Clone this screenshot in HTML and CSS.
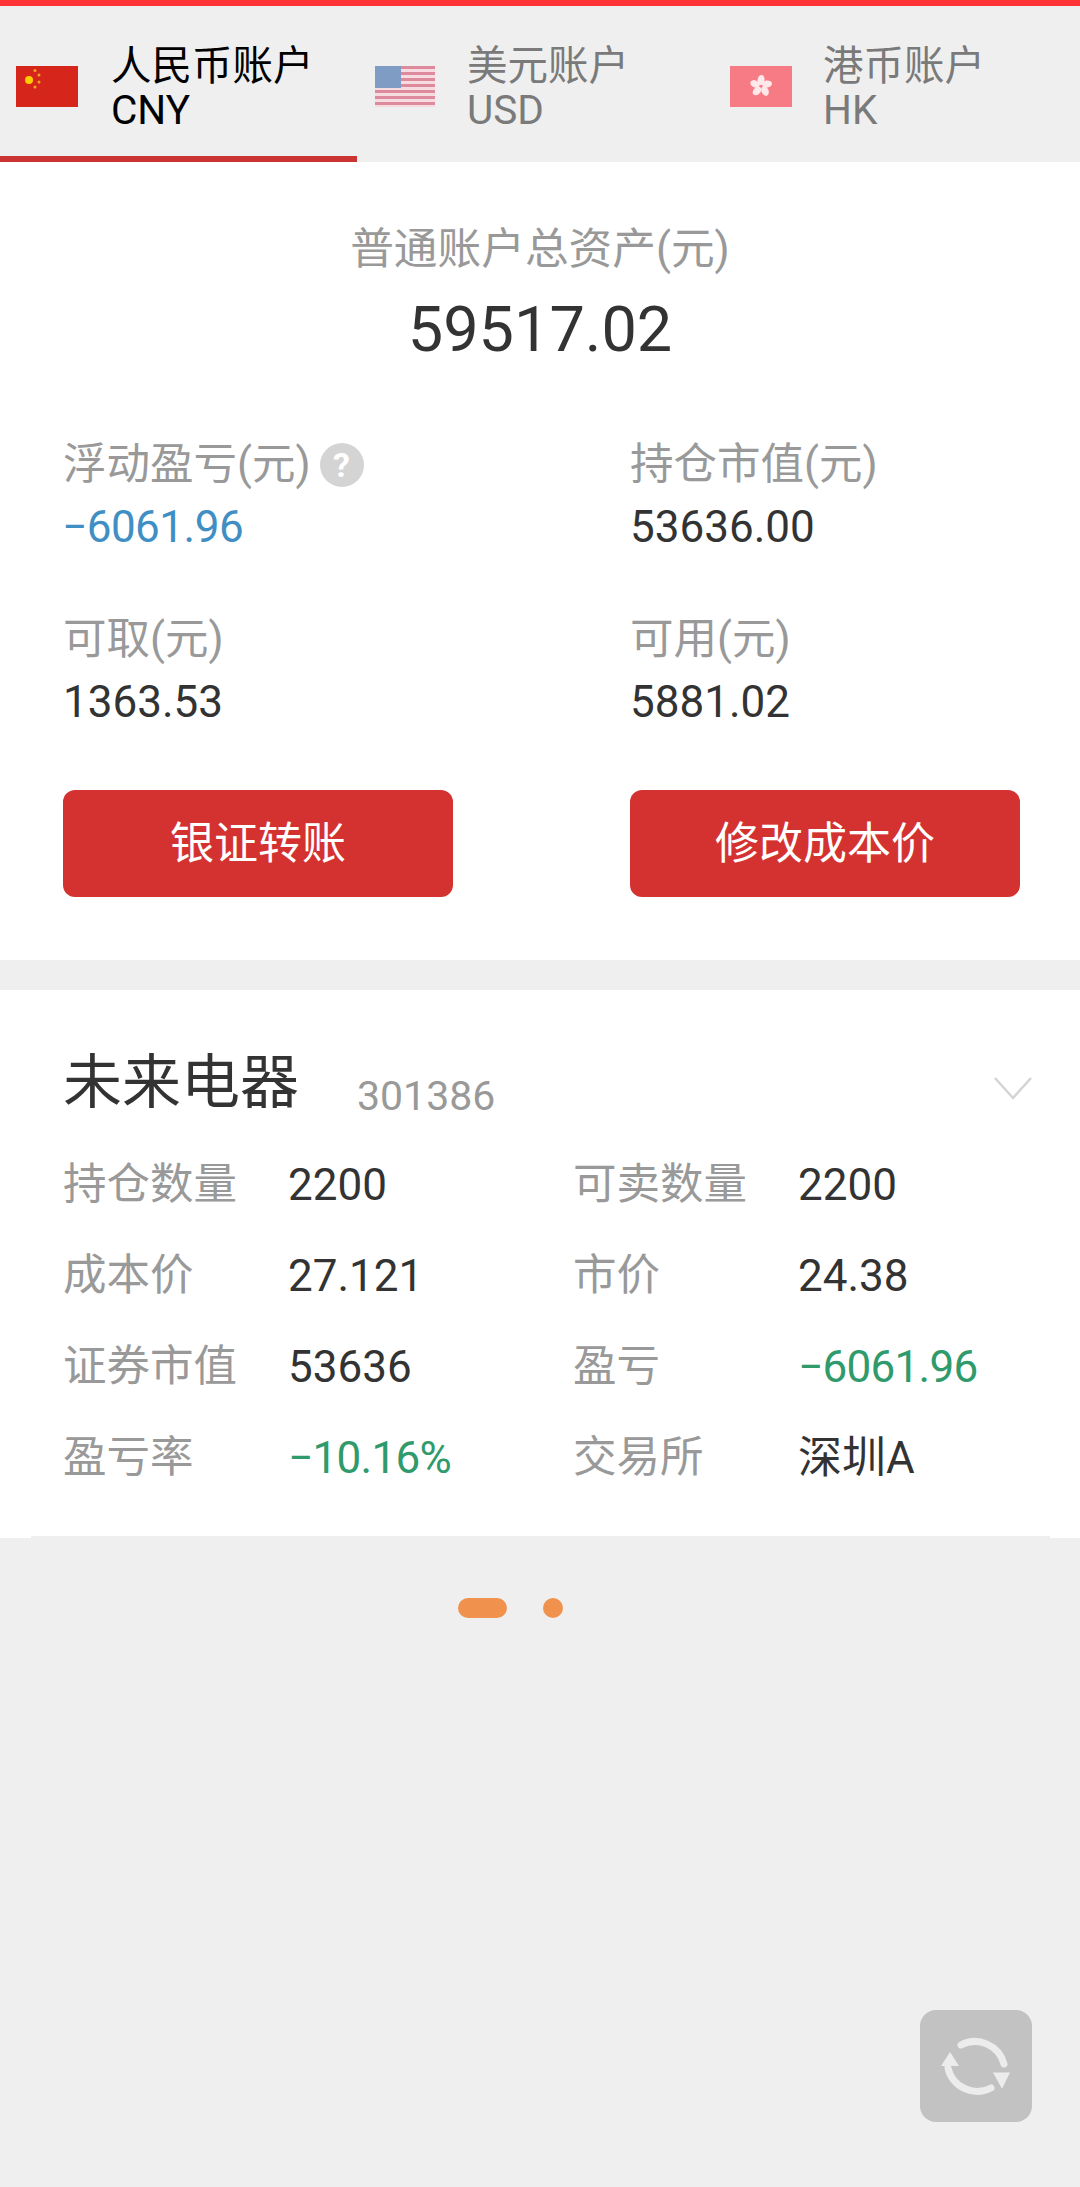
FILE: index.html
```html
<!DOCTYPE html>
<html lang="zh-CN">
<head>
<meta charset="utf-8">
<title>账户</title>
<link rel="stylesheet" href="styles.css">
</head>
<body>
<div class="page">
  <div class="topbar"></div>
  <nav class="tabs">
    <div class="tab active">
      <svg class="flag" viewBox="0 0 62 41"><rect width="62" height="41" fill="#d6261c"/><circle cx="13" cy="14" r="4" fill="#fc0"/><circle cx="19" cy="4.500" r="1.500" fill="#f5a623"/><circle cx="23" cy="9" r="1.500" fill="#f5a623"/><circle cx="23" cy="16" r="1.500" fill="#f5a623"/><circle cx="19" cy="21" r="1.500" fill="#f5a623"/></svg>
      <div class="tab-text"><span>人民币账户</span><span>CNY</span></div>
    </div>
    <div class="tab">
      <svg class="flag usa" viewBox="0 0 60 41"><rect width="60" height="41" fill="#f6dbe0"/><path d="M0 1.500H60M0 7.500H60M0 13.500H60M0 19.500H60M0 25.500H60M0 31.500H60M0 37.500H60" stroke="#dd8b9c" stroke-width="3"/><rect width="26" height="22" fill="#7f9cc4"/></svg>
      <div class="tab-text"><span>美元账户</span><span>USD</span></div>
    </div>
    <div class="tab">
      <svg class="flag" viewBox="0 0 62 41"><rect width="62" height="41" fill="#f77b85"/><g fill="#fde9ea"><ellipse cx="31" cy="14" rx="3.500" ry="5" transform="rotate(10 31 14)"/><ellipse cx="37" cy="18" rx="3.500" ry="5" transform="rotate(82 37 18)"/><ellipse cx="35" cy="25" rx="3.500" ry="5" transform="rotate(154 35 25)"/><ellipse cx="27" cy="25" rx="3.500" ry="5" transform="rotate(226 27 25)"/><ellipse cx="25" cy="18" rx="3.500" ry="5" transform="rotate(298 25 18)"/></g></svg>
      <div class="tab-text"><span>港币账户</span><span>HK</span></div>
    </div>
  </nav>

  <section class="summary">
    <div class="total-label">普通账户总资产(元)</div>
    <div class="total-value">59517.02</div>
    <div class="stats">
      <div class="stat">
        <div class="stat-label">浮动盈亏(元)<span class="help">?</span></div>
        <div class="stat-value blue">−6061.96</div>
      </div>
      <div class="stat">
        <div class="stat-label">持仓市值(元)</div>
        <div class="stat-value">53636.00</div>
      </div>
      <div class="stat">
        <div class="stat-label">可取(元)</div>
        <div class="stat-value">1363.53</div>
      </div>
      <div class="stat">
        <div class="stat-label">可用(元)</div>
        <div class="stat-value">5881.02</div>
      </div>
    </div>
    <div class="actions">
      <button class="btn">银证转账</button>
      <button class="btn">修改成本价</button>
    </div>
  </section>

  <section class="position">
    <div class="pos-head">
      <span class="pos-name">未来电器</span>
      <span class="pos-code">301386</span>
      <svg class="chevron" viewBox="0 0 40 24"><path d="M2 2L20 22L38 2" fill="none" stroke="#d4d4d4" stroke-width="2.500"/></svg>
    </div>
    <div class="pos-grid">
      <span class="k">持仓数量</span><span class="v">2200</span><span class="k">可卖数量</span><span class="v">2200</span>
      <span class="k">成本价</span><span class="v">27.121</span><span class="k">市价</span><span class="v">24.38</span>
      <span class="k">证券市值</span><span class="v">53636</span><span class="k">盈亏</span><span class="v green">−6061.96</span>
      <span class="k">盈亏率</span><span class="v green">−10.16%</span><span class="k">交易所</span><span class="v">深圳A</span>
    </div>
    <div class="rule"></div>
  </section>

  <div class="dots"><span class="dot wide"></span><span class="dot"></span></div>

  <div class="refresh">
    <svg viewBox="0 0 112 112" width="112" height="112"><g fill="none" stroke="#ececec" stroke-width="7" stroke-linecap="round"><path d="M41 35A30 30 0 0 1 84 54"/><path d="M71 78A30 30 0 0 1 28 58"/></g><path d="M73 57H90L82 71Z" fill="#ececec" transform="translate(0 -3) scale(1 1.150)"/><path d="M21 56H39L30 42Z" fill="#ececec"/></svg>
  </div>
</div>
</body>
</html>
```
FILE: styles.css
```css
* { box-sizing: border-box; }
html, body { margin: 0; padding: 0; }
body {
  background: #efefef;
  font-family: Roboto, "Noto Sans CJK SC", sans-serif;
}
.page { position: relative; width: 1080px; height: 2187px; overflow: hidden; background: #efefef; }
.topbar { height: 6px; background: #ff3336; }

.tabs { display: flex; height: 156px; background: #efefef; }
.tab { width: 357px; display: flex; align-items: flex-start; height: 156px; color: #7a7a7a; padding-left: 16px; }
.tab:nth-child(2) { padding-left: 18px; width: 355px; }
.tab:nth-child(3) { padding-left: 18px; }
.tab.active { color: #000; border-bottom: 6px solid #cc3333; }
.flag { width: 62px; height: 41px; flex: none; margin-top: 60px; }
.flag.usa { width: 60px; }
.tab-text { display: flex; flex-direction: column; margin: 38px 0 0 33px; font-size: 40.5px; line-height: 44px; }
.tab:nth-child(2) .tab-text { margin-left: 32px; }
.tab:nth-child(3) .tab-text { margin-left: 31px; }

.summary { background: #fff; height: 798px; padding-top: 57px; }
.total-label { text-align: center; font-size: 43.7px; line-height: 60px; color: #999; }
.total-value { text-align: center; font-size: 63px; line-height: 80px; color: #333; margin-top: 11px; }
.stats { display: grid; grid-template-columns: 567px 1fr; margin-top: 64px; padding-left: 63px; row-gap: 51px; }
.stat-label { display: flex; align-items: center; font-size: 43.5px; line-height: 62px; color: #999; }
.stat-value { font-size: 44px; line-height: 62px; color: #333; }
.stat-value.blue { color: #3f8fc4; letter-spacing: -0.5px; margin-left: -1px; }
.help {
  display: inline-block; width: 44px; height: 44px; margin-left: 9px; border-radius: 50%;
  background: #d4d4d4; color: #fff; font-size: 34px; line-height: 44px; font-weight: 700; text-align: center;
}
.actions { display: flex; justify-content: space-between; padding: 0 60px 0 63px; margin-top: 57px; }
.btn {
  width: 390px; height: 107px; border: 0; border-radius: 12px; background: #d43230; color: #fff;
  font-family: inherit; font-size: 44px; padding: 0 0 8px;
}

.position { position: relative; background: #fff; margin-top: 30px; height: 548px; padding: 54px 0 0 63px; }
.pos-head { display: flex; align-items: flex-start; height: 76px; }
.pos-name { font-size: 59px; line-height: 78px; color: #333; }
.pos-code { font-size: 41px; line-height: 60px; color: #999; margin: 22px 0 0 58px; }
.chevron { position: absolute; right: 47px; top: 86px; width: 40px; height: 24px; }
.pos-grid { display: grid; grid-template-columns: 225px 285px 225px 1fr; grid-auto-rows: 91px; margin-top: 19px; line-height: 60px; align-items: center; }
.k { color: #999; font-size: 43.5px; }
.v { color: #333; font-size: 44px; }
.v.green { color: #2f9a6b; letter-spacing: -0.7px; }
.rule { position: absolute; left: 31px; right: 30px; bottom: 0; height: 2px; background: #efefef; }

.dots { display: flex; gap: 36px; margin-top: 60px; margin-left: 458px; height: 20px; }
.dot { display: block; width: 20px; height: 20px; border-radius: 10px; background: #f0924e; }
.dot.wide { width: 49px; }

.refresh { position: absolute; left: 920px; top: 2010px; width: 112px; height: 112px; border-radius: 16px; background: #c2c2c2; }
.refresh svg { display: block; }
```
